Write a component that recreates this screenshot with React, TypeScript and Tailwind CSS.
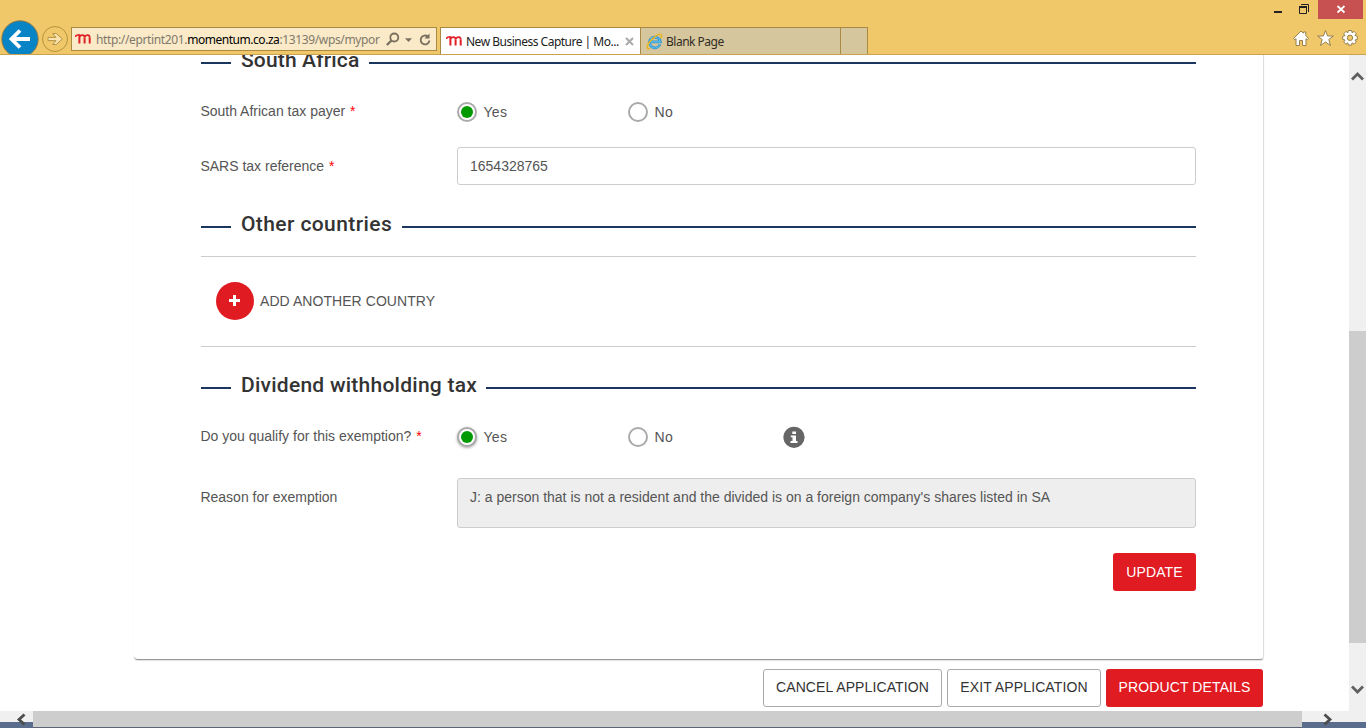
import type { ReactNode } from "react";

const body = "font-['Liberation_Sans',Arial,sans-serif]";
const chrome = "font-['Noto_Sans','Open_Sans',sans-serif]";

function Logo() {
  return (
    <svg width="17" height="12" viewBox="0 0 17 12" fill="none" stroke="#e01f26" className="shrink-0">
      <path d="M0.6 4C0.6 2.4 1.5 2 2.6 2H4.4" strokeWidth="1.5" />
      <path d="M4.4 10.6V1.3M9.6 10.6V4.4M14.7 10.6V4.4" strokeWidth="2" />
      <path d="M4.8 3.4C6 1.6 9.6 1.2 9.6 4.6M10 3.4C11.2 1.6 14.7 1.2 14.7 4.6" strokeWidth="1.8" />
    </svg>
  );
}

function IeIcon() {
  return (
    <svg width="17" height="17" viewBox="0 0 17 17" fill="none" className="shrink-0">
      <path d="M14 11.4A5.4 5.4 0 1 1 14.3 8.9H5" stroke="#258fd0" strokeWidth="2.7" />
      <path d="M14 11.4A5.4 5.4 0 1 1 14.3 8.9H5" stroke="#62c4ee" strokeWidth="1.1" />
      <path d="M4 15.2C1 17 .2 14.3 2.5 10.5C6 4.8 13 0 15 1.6C16 2.4 15.4 4 14.8 5" stroke="#e9b51e" strokeWidth="1.5" />
    </svg>
  );
}

function Titlebar() {
  return (
    <header className={`${chrome} flex h-[55px] shrink-0 items-start overflow-hidden border-b border-[#c9a450] bg-[#f0c869] text-xs`}>
      <svg width="71" height="54" viewBox="0 0 71 54" fill="none" className="shrink-0">
        <circle cx="20" cy="39" r="18.2" fill="#0684c6" stroke="#8d7a45" strokeWidth="1" />
        <path d="M30 39H12M20 30.5L11.5 39L20 47.5" stroke="#fff" strokeWidth="3.8" />
        <circle cx="55" cy="39" r="12.5" stroke="#b5923f" />
        <path d="M48 37.4H56L52.7 33.5H56.2L62.3 39L56.2 44.5H52.7L56 40.6H48Z" fill="#f8e2ae" stroke="#ae8d42" strokeWidth="0.9" />
      </svg>
      <div className="mt-[27px] flex h-6 w-[366px] shrink-0 items-center border border-[#a98a43] bg-[#faeac8] pl-[3px]">
        <Logo />
        <span className="ml-1 w-[289px] whitespace-nowrap pt-0.5 tracking-[-0.365px] text-[#81796a]">
          http://eprtint201.<span className="tracking-[-0.46px] text-black">momentum.co.za</span>:13139/wps/mypor
        </span>
        <svg width="48" height="20" viewBox="0 0 48 20" fill="none" stroke="#796f5e" className="shrink-0">
          <circle cx="9.3" cy="8.5" r="4" strokeWidth="1.8" />
          <path d="M6.5 11.5L1.8 16" strokeWidth="2.4" />
          <path d="M20 9.3H27L23.5 13Z" fill="#796f5e" stroke="none" />
          <path d="M43 7.7A4.4 4.4 0 1 0 44.4 11.5" strokeWidth="1.9" />
          <path d="M44.5 4.5V9.5H39.5Z" fill="#796f5e" stroke="none" />
        </svg>
      </div>
      <div className="ml-[3px] mt-[27px] flex h-7 border-x border-t border-[#a98a43]">
        <div className="flex w-[199px] items-center bg-white pb-px pl-[5px]">
          <Logo />
          <span className="ml-[3px] w-[155px] whitespace-nowrap pt-0.5 tracking-[-0.5px] text-[#222]">New Business Capture | Mo...</span>
          <svg width="9" height="9" viewBox="0 0 9 9" stroke="#aaa" strokeWidth="2.1" className="ml-1 shrink-0">
            <path d="M1 1L8 8M8 1L1 8" />
          </svg>
        </div>
        <div className="flex w-[201px] items-center border-x border-[#a98a43] bg-[#d6c69e] pb-px pl-[5px]">
          <IeIcon />
          <span className="ml-[3px] whitespace-nowrap pt-0.5 tracking-[-0.5px] text-[#302c22]">Blank Page</span>
        </div>
        <div className="w-[26px] bg-[#d6c69e]" />
      </div>
      <div className="ml-auto flex w-[100px] flex-col">
        <svg width="100" height="19" viewBox="0 0 100 19" fill="none">
          <rect x="8" y="11" width="8" height="2" fill="#222" />
          <path d="M33.5 6.5H40.5V13.5H33.5ZM35 4.5H42.5V12" stroke="#222" />
          <path d="M33 7H41" stroke="#222" strokeWidth="2" />
          <rect x="52" width="45" height="19" fill="#c75050" />
          <path d="M71.5 6L78.5 12.5M78.5 6L71.5 12.5" stroke="#fff" strokeWidth="1.8" />
        </svg>
        <svg width="100" height="35" viewBox="0 0 100 35" fill="#fff" stroke="#96804c" strokeWidth="1">
          <path d="M27.5 19.5L35 12L37.3 14.2V13H39.8V16.5L42.5 19.5L41.2 20.8L40 19.7V26.5H36.5V21.5H33.5V26.5H30V19.7L28.8 20.8Z" />
          <path d="M59.5 11.5L61.6 17H67.4L62.8 20.5L64.5 26.5L59.5 23L54.5 26.5L56.2 20.5L51.6 17H57.4Z" />
          <path d="M82.4 11.5H85.6L86.1 13.7L88.1 12.4L90.3 14.7L89 16.6L91.3 17.2V20.4L89 21L90.3 22.9L88.1 25.2L86.1 23.9L85.6 26.1H82.4L81.9 23.9L79.9 25.2L77.7 22.9L79 21L76.7 20.4V17.2L79 16.6L77.7 14.7L79.9 12.4L81.9 13.7Z" />
          <circle cx="84" cy="18.8" r="2.7" fill="#f0c869" />
        </svg>
      </div>
    </header>
  );
}

function Heading({ children, width, className }: { children: ReactNode; width: string; className: string }) {
  return (
    <div className={`flex h-[22px] items-center ${className}`}>
      <div className="h-0.5 w-[30px] bg-[#1b365f]" />
      <h2 className={`mx-2.5 whitespace-nowrap pb-1.5 font-['Roboto',sans-serif] text-[21px] font-medium leading-[22px] text-[#333] ${width}`}>{children}</h2>
      <div className="h-0.5 flex-1 bg-[#1b365f]" />
    </div>
  );
}

function Label({ children, required }: { children: ReactNode; required?: boolean }) {
  return (
    <div className="-ml-[0.6px] w-[256.6px] shrink-0 whitespace-nowrap">
      {children}
      {required && <span className="ml-px text-[#f00]"> *</span>}
    </div>
  );
}

function Radio({ label, checked, focused, className }: { label: string; checked?: boolean; focused?: boolean; className: string }) {
  return (
    <label className={`flex items-center ${className}`}>
      <span className={`flex size-5 items-center justify-center rounded-full border-2 border-[#aaa] bg-white ${focused ? "shadow-[0_1px_3px_rgba(0,0,0,0.35)]" : ""}`}>
        {checked && <span className="size-3 rounded-full bg-[#090]" />}
      </span>
      <span className="ml-[6.5px] tracking-[0.3px]">{label}</span>
    </label>
  );
}

const button = "flex h-[38px] items-center justify-center whitespace-nowrap rounded-[3px] text-[14px] tracking-[0.12px]";

export default function App() {
  return (
    <div className={`${body} flex h-[728px] w-[1366px] flex-col overflow-hidden bg-white text-[14px] leading-5 text-[#555]`}>
      <Titlebar />
      <div className="flex h-[656px] shrink-0">
        <main className="w-[1349px] overflow-hidden">
          <div className="ml-[134px] h-[605px] w-[1130px] overflow-hidden rounded-b-[4px] border-b border-r border-b-[#999] border-r-[#ddd] pl-[67px] pr-[67px] shadow-[0_1px_1px_rgba(0,0,0,0.12)]">
            <Heading className="-mt-[3px]" width="w-[118px] tracking-[0.15px]">South Africa</Heading>
            <div className="mt-7 flex h-5 items-center">
              <div className="pb-0.5"><Label required>South African tax payer</Label></div>
              <Radio label="Yes" checked className="w-[171px]" />
              <Radio label="No" className="" />
            </div>
            <div className="mt-[25px] flex items-center">
              <Label required>SARS tax reference</Label>
              <div className="flex h-[38px] flex-1 items-center rounded-[3px] border border-[#ccc] px-3">1654328765</div>
            </div>
            <Heading className="mt-[31px]" width="w-[151px] tracking-[0.4px]">Other countries</Heading>
            <div className="mt-[18px] flex h-[91px] items-center border-y border-[#ccc] pb-px pl-[15px]">
              <span className="flex size-[38px] items-center justify-center rounded-full bg-[#e01b22]">
                <svg width="12" height="12" viewBox="0 0 12 12" stroke="#fff" strokeWidth="3"><path d="M0 5.5H11M5.5 0V11" /></svg>
              </span>
              <span className="ml-1.5 tracking-[0.06px]">ADD ANOTHER COUNTRY</span>
            </div>
            <Heading className="mt-[30px]" width="w-[235px] tracking-[0.25px]">Dividend withholding tax</Heading>
            <div className="mt-7 flex h-5 items-center">
              <div className="pb-0.5"><Label required>Do you qualify for this exemption?</Label></div>
              <Radio label="Yes" checked focused className="w-[171px]" />
              <Radio label="No" className="w-[154.5px]" />
              <svg width="22" height="22" viewBox="0 0 22 22" fill="#fff">
                <circle cx="11" cy="11.3" r="10.6" fill="#666" />
                <path d="M9.3 5.5H13V8H9.3ZM7.8 9.5H13V15H14.5V17H7.5V15H9.5V11.3H7.8Z" />
              </svg>
            </div>
            <div className="mt-[31px] flex">
              <div className="pt-[9px]"><Label>Reason for exemption</Label></div>
              <div className="h-[50px] flex-1 whitespace-nowrap rounded-[3px] border border-[#ccc] bg-[#eee] px-3 pt-2">J: a person that is not a resident and the divided is on a foreign company's shares listed in SA</div>
            </div>
            <div className="mt-[25px] flex justify-end">
              <button className={`${button} w-[83px] bg-[#e01b22] text-white`}>UPDATE</button>
            </div>
          </div>
          <div className="mr-[86px] mt-[9px] flex justify-end gap-[5px] text-[#333]">
            <button className={`${button} w-[179px] border border-[#aaa] pb-0.5`}>CANCEL APPLICATION</button>
            <button className={`${button} w-[154px] border border-[#aaa] pb-0.5`}>EXIT APPLICATION</button>
            <button className={`${button} w-[157px] bg-[#e01b22] pb-0.5 text-white`}>PRODUCT DETAILS</button>
          </div>
        </main>
        <div className="flex w-[17px] flex-col items-center bg-[#f0f0f0]">
          <svg width="17" height="276" viewBox="0 0 17 276" fill="none" stroke="#606060" strokeWidth="2.8"><path d="M3 24.5L8.5 19L14 24.5" /></svg>
          <div className="h-[312px] w-full bg-[#cdcdcd]" />
          <svg width="17" height="68" viewBox="0 0 17 68" fill="none" stroke="#606060" strokeWidth="2.8"><path d="M3 43.5L8.5 49L14 43.5" /></svg>
        </div>
      </div>
      <footer className="flex h-[17px] shrink-0">
        <div className="h-full w-[33px] border-b-[6px] border-[#5a6d8c] bg-[#f0f0f0]">
          <svg width="33" height="17" viewBox="0 0 33 17" fill="none" stroke="#4c4c4c" strokeWidth="2.8"><path d="M24.5 3.5L19 8.5L24.5 13.5" /></svg>
        </div>
        <div className="h-full w-[1269px] border-b border-[#5b6475] bg-[#cdcdcd]" />
        <div className="h-full w-16 border-b-[6px] border-[#5a6d8c] bg-[#f0f0f0]">
          <svg width="64" height="17" viewBox="0 0 64 17" fill="none" stroke="#4c4c4c" strokeWidth="2.8"><path d="M22.5 3.5L28 8.5L22.5 13.5" /></svg>
        </div>
      </footer>
    </div>
  );
}
